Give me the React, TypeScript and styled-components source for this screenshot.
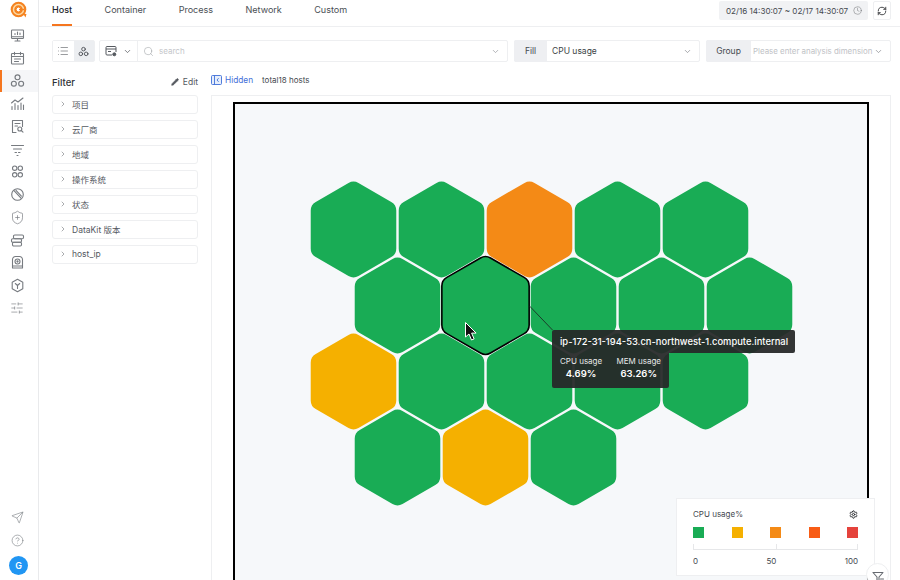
import React from 'react';
import styled, { createGlobalStyle } from 'styled-components';
import {
  ChevronDown,
  ChevronRight,
  CircleHelp,
  Clock,
  List,
  Pencil,
  RefreshCw,
  Search,
  Send,
  Settings,
  ShieldPlus,
  SlidersHorizontal,
} from 'lucide-react';

const GlobalStyle = createGlobalStyle`
  html, body {
    margin: 0;
    padding: 0;
    background: #fff;
    overflow: hidden;
  }
  body {
    font-family: Inter, "Noto Sans CJK SC", sans-serif;
    color: #33373d;
  }
  * { box-sizing: border-box; }
`;

const Page = styled.div`
  display: flex;
  width: 900px;
  height: 580px;
  overflow: hidden;
`;

const Sidebar = styled.nav`
  flex: 0 0 39px;
  display: flex;
  flex-direction: column;
  align-items: stretch;
  border-right: 1px solid #e9eaec;
  padding-bottom: 5px;
`;

const LogoSlot = styled.div`
  height: 24px;
  padding: 1px 0 0 10px;
`;

const NavItem = styled.div<{ $active?: boolean }>`
  height: 22.75px;
  display: flex;
  justify-content: center;
  align-items: center;
  padding-right: 6px;
  color: #777b80;
  background: ${p => (p.$active ? '#f5f6f8' : 'transparent')};
  border-left: 2px solid ${p => (p.$active ? '#f5761f' : 'transparent')};
`;

const SideSpacer = styled.div`
  flex: 1;
`;

const Avatar = styled.div`
  width: 19px;
  height: 19px;
  margin: 4px 0 0 9px;
  border-radius: 50%;
  background: #2196f3;
  color: #fff;
  font-size: 9px;
  font-weight: 600;
  display: flex;
  justify-content: center;
  align-items: center;
`;

const Main = styled.main`
  flex: 1;
  min-width: 0;
  display: flex;
  flex-direction: column;
  padding-left: 13px;
`;

const TopBar = styled.header`
  height: 27px;
  margin-left: -13px;
  padding: 0 9px 0 13px;
  display: flex;
  justify-content: space-between;
  border-bottom: 1px solid #eeeff1;
`;

const Tabs = styled.div`
  display: flex;
  gap: 32.4px;
`;

const Tab = styled.div<{ $active?: boolean }>`
  height: 26px;
  padding-top: 3px;
  font-size: 9.05px;
  line-height: 14px;
  color: ${p => (p.$active ? '#24272b' : '#4b4f55')};
  font-weight: ${p => (p.$active ? 500 : 400)};
  border-bottom: 2px solid ${p => (p.$active ? '#f5761f' : 'transparent')};
`;

const TopActions = styled.div`
  display: flex;
  gap: 5px;
  padding-top: 1px;
`;

const DateButton = styled.div`
  width: 149px;
  height: 19px;
  padding-left: 7px;
  border-radius: 2px;
  background: #f1f2f4;
  display: flex;
  align-items: center;
  gap: 5px;
  font-size: 8.1px;
  white-space: nowrap;
  color: #45494f;
`;

const RefreshButton = styled.div`
  width: 18px;
  height: 19px;
  border: 1px solid #eeeff1;
  border-radius: 2px;
  display: flex;
  justify-content: center;
  align-items: center;
  color: #26292d;
`;

const Toolbar = styled.div`
  height: 22px;
  margin: 13px 9px 0 0;
  display: flex;
  gap: 6px;
`;

const ToggleGroup = styled.div`
  width: 43px;
  display: flex;
  border: 1px solid #eeeff1;
  border-radius: 2px;
  margin-right: -2px;
`;

const ToggleButton = styled.div<{ $active?: boolean }>`
  flex: 1;
  display: flex;
  justify-content: center;
  align-items: center;
  color: #45494f;
  background: ${p => (p.$active ? '#eceef1' : '#fff')};
`;

const SearchGroup = styled.div`
  width: 409px;
  display: flex;
  align-items: center;
  border: 1px solid #eeeff1;
  border-radius: 2px;
  color: #8b8e93;
`;

const SearchScope = styled.div`
  width: 38px;
  height: 100%;
  display: flex;
  justify-content: center;
  align-items: center;
  gap: 6px;
  border-right: 1px solid #eeeff1;
  color: #55595f;
`;

const SearchInput = styled.div`
  flex: 1;
  display: flex;
  align-items: center;
  gap: 5px;
  padding: 0 7px 0 5px;
  font-size: 8px;
  color: #c4c6ca;
`;

const PushRight = styled.div`
  margin-left: auto;
  display: flex;
  color: #9b9ea3;
`;

const FieldGroup = styled.div<{ $width: number }>`
  width: ${p => p.$width}px;
  display: flex;
  border: 1px solid #eeeff1;
  border-radius: 2px;
`;

const FieldLabel = styled.div<{ $width: number }>`
  flex: 0 0 ${p => p.$width}px;
  margin: -1px 0 -1px -1px;
  background: #eeeff2;
  border-radius: 2px 0 0 2px;
  display: flex;
  justify-content: center;
  align-items: center;
  font-size: 8.5px;
  color: #45494f;
`;

const FieldValue = styled.div<{ $muted?: boolean }>`
  flex: 1;
  min-width: 0;
  display: flex;
  justify-content: space-between;
  align-items: center;
  padding: 0 7px 0 ${p => (p.$muted ? 2 : 5)}px;
  font-size: ${p => (p.$muted ? 7.9 : 8.5)}px;
  white-space: nowrap;
  color: ${p => (p.$muted ? '#c0c2c6' : '#3b3f45')};
  svg { color: #8b8e93; flex: none; }
`;

const Content = styled.div`
  flex: 1;
  min-height: 0;
  display: flex;
  gap: 13px;
  margin-right: 9px;
`;

const FilterColumn = styled.aside`
  flex: 0 0 146px;
`;

const FilterHeader = styled.div`
  height: 33px;
  padding-top: 7px;
  display: flex;
  justify-content: space-between;
  align-items: center;
  font-size: 9.5px;
  font-weight: 500;
  color: #2d3136;
`;

const EditLink = styled.div`
  display: flex;
  align-items: center;
  gap: 4px;
  font-size: 8.5px;
  font-weight: 400;
  color: #55595f;
`;

const FilterList = styled.div`
  display: flex;
  flex-direction: column;
  gap: 6px;
`;

const FilterItem = styled.div`
  height: 19px;
  border: 1px solid #eeeff1;
  border-radius: 3px;
  display: flex;
  align-items: center;
  gap: 5px;
  padding: 0 0 2px 6px;
  font-size: 8.5px;
  color: #55595f;
`;

const ChartColumn = styled.section`
  flex: 1;
  min-width: 0;
  display: flex;
  flex-direction: column;
`;

const SummaryRow = styled.div`
  height: 33px;
  padding-top: 3px;
  display: flex;
  align-items: center;
  gap: 9px;
  font-size: 8px;
  color: #45494f;
`;

const HiddenLink = styled.div`
  display: flex;
  align-items: center;
  gap: 3px;
  font-size: 8.3px;
  color: #3f6fd8;
`;

const Panel = styled.div`
  flex: 1;
  min-height: 0;
  border: 1px solid #eeeff1;
  border-bottom: none;
  padding: 6px 21px 0;
  position: relative;
`;

const Canvas = styled.div`
  height: 500px;
  border: 2px solid #000;
  background: #f6f8fa;
  position: relative;
`;

const HexMap = styled.svg`
  display: block;
  width: 100%;
  height: 100%;
`;

const TooltipBox = styled.div`
  position: absolute;
  left: 317px;
  top: 226px;
  color: #fff;
`;

const TooltipTitle = styled.div`
  width: 243px;
  height: 23px;
  padding-left: 8px;
  display: flex;
  align-items: center;
  font-size: 9.4px;
  font-weight: 500;
  white-space: nowrap;
  background: rgba(38, 40, 40, 0.94);
  border-radius: 2px 2px 2px 0;
`;

const TooltipStats = styled.div`
  width: 117px;
  height: 35px;
  padding: 3px 8px 0;
  display: flex;
  justify-content: space-between;
  background: rgba(38, 40, 40, 0.94);
  border-radius: 0 0 2px 2px;
`;

const Stat = styled.div`
  text-align: center;
  font-size: 8px;
  line-height: 11px;
  color: #e8e8e8;
`;

const StatValue = styled.div`
  font-size: 9.5px;
  line-height: 13px;
  font-weight: 600;
  color: #fff;
`;

const Legend = styled.div`
  position: absolute;
  left: 441px;
  top: 394px;
  width: 199px;
  height: 78px;
  padding: 9px 16px;
  background: #fff;
  border: 1px solid #eeeff1;
`;

const LegendTitle = styled.div`
  display: flex;
  justify-content: space-between;
  align-items: center;
  font-size: 8px;
  line-height: 12px;
  color: #45494f;
  svg { color: #26292d; }
`;

const Swatches = styled.div`
  margin-top: 7px;
  display: flex;
  justify-content: space-between;
`;

const Swatch = styled.div<{ $color: string }>`
  width: 11px;
  height: 11px;
  background: ${p => p.$color};
`;

const ScaleBar = styled.div`
  height: 6px;
  margin-top: 6px;
  border: 1px solid #e6e7e9;
  border-top: none;
  position: relative;
  &::after {
    content: '';
    position: absolute;
    left: 50%;
    top: 0;
    bottom: 0;
    width: 1px;
    background: #e6e7e9;
  }
`;

const ScaleLabels = styled.div`
  margin-top: 6px;
  display: flex;
  justify-content: space-between;
  font-size: 8px;
  color: #45494f;
`;

const RoundButton = styled.div`
  position: absolute;
  left: 631px;
  top: 459px;
  width: 23px;
  height: 23px;
  padding-top: 7px;
  border-radius: 50%;
  background: #fff;
  border: 1px solid #eeeff1;
  display: flex;
  justify-content: center;
  color: #666a70;
`;

const GREEN = '#19ac55';
const YELLOW = '#f5b000';
const ORANGE = '#f48a16';

// page coordinates minus the canvas corner (235, 104)
const hexes = [
  ...[GREEN, GREEN, ORANGE, GREEN, GREEN].map((c, i) => ({ x: 353.5 + i * 88, y: 229.5, c })),
  ...[GREEN, GREEN, GREEN, GREEN, GREEN].map((c, i) => ({ x: 397.5 + i * 88, y: 305.5, c })),
  ...[YELLOW, GREEN, GREEN, GREEN, GREEN].map((c, i) => ({ x: 353.5 + i * 88, y: 381.5, c })),
  ...[GREEN, YELLOW, GREEN].map((c, i) => ({ x: 397.5 + i * 88, y: 457.5, c })),
].map(h => ({ ...h, x: h.x - 235, y: h.y - 104 }));

function hexPath(cx: number, cy: number, R: number, r: number) {
  const pts = [0, 1, 2, 3, 4, 5].map(i => {
    const a = (Math.PI / 3) * i - Math.PI / 2;
    return [cx + R * Math.cos(a), cy + R * Math.sin(a)];
  });
  const cut = r * Math.tan(Math.PI / 6);
  let d = '';
  pts.forEach((p, i) => {
    const prev = pts[(i + 5) % 6];
    const next = pts[(i + 1) % 6];
    const toward = (q: number[]) => {
      const dx = q[0] - p[0];
      const dy = q[1] - p[1];
      const len = Math.hypot(dx, dy);
      return [p[0] + (dx / len) * cut, p[1] + (dy / len) * cut];
    };
    const a = toward(prev);
    const b = toward(next);
    d += `${i === 0 ? 'M' : 'L'}${a[0].toFixed(2)} ${a[1].toFixed(2)} A${r} ${r} 0 0 1 ${b[0].toFixed(2)} ${b[1].toFixed(2)} `;
  });
  return d + 'Z';
}

const Logo = () => (
  <svg width="18" height="18" viewBox="0 0 18 18">
    <circle cx="8.500" cy="8.500" r="7.800" fill="#f5821f" />
    <path d="M13 12.500l3.500 0.500-1 3.500z" fill="#f5821f" />
    <circle cx="8.500" cy="8.500" r="5" fill="none" stroke="#fbd9a4" strokeWidth="1.500" />
    <circle cx="8.500" cy="8.500" r="2.400" fill="#fff" stroke="#f5821f" strokeWidth="1" />
    <path d="M9 8.500h5.500" stroke="#f5821f" strokeWidth="1.400" />
  </svg>
);

const stroke = {
  fill: 'none',
  stroke: 'currentColor',
  strokeWidth: 1.1,
  strokeLinecap: 'round' as const,
  strokeLinejoin: 'round' as const,
};

const MonitorIcon = () => (
  <svg width="15" height="15" viewBox="0 0 15 15" {...stroke}>
    <rect x="1.500" y="2" width="12" height="8.500" rx="0.800" />
    <path d="M1.500 8.800h12M5 13h5M7.500 10.500V13" />
    <path d="M5 6.500v-1M7.500 6.500V4M10 6.500V5" />
  </svg>
);

const CalendarIcon = () => (
  <svg width="15" height="15" viewBox="0 0 15 15" {...stroke}>
    <rect x="1.500" y="2.500" width="12" height="10.500" rx="0.800" />
    <path d="M1.500 5.500h12M4.500 1.300v2.400M10.500 1.300v2.400M4.500 8h6M4.500 10.500h4" />
  </svg>
);

const HostIcon = ({ size = 14 }: { size?: number }) => (
  <svg width={size} height={size} viewBox="0 0 14 14" {...stroke}>
    <circle cx="7" cy="4" r="2.300" />
    <circle cx="3.600" cy="10" r="2.300" />
    <circle cx="10.400" cy="10" r="2.300" />
  </svg>
);

const ChartIcon = () => (
  <svg width="15" height="15" viewBox="0 0 15 15" {...stroke}>
    <path d="M1.500 7l3.500-3 3 2 5-4" />
    <path d="M2 13.500v-3M5 13.500V7.500M8 13.500V9.500M11 13.500V7M13.500 13.500V9" />
  </svg>
);

const ReportIcon = () => (
  <svg width="15" height="15" viewBox="0 0 15 15" {...stroke}>
    <path d="M6 13.500H2.500v-12h10v6" />
    <path d="M5 4.500h5M5 7h2.500" />
    <circle cx="9.800" cy="10" r="2" />
    <path d="M11.300 11.500l1.700 1.700" />
  </svg>
);

const FunnelLinesIcon = () => (
  <svg width="15" height="15" viewBox="0 0 15 15" {...stroke}>
    <path d="M1.500 3.500h12M3.500 7h8" />
    <path d="M5 10.500h1.500M8.500 10.500h1.500M7 13.500h1" />
  </svg>
);

const ClustersIcon = () => (
  <svg width="15" height="15" viewBox="0 0 15 15" {...stroke}>
    <circle cx="4.700" cy="4.200" r="2.200" />
    <circle cx="10.300" cy="4.200" r="2.200" />
    <circle cx="4.700" cy="10.800" r="2.200" />
    <circle cx="10.300" cy="10.800" r="2.200" />
  </svg>
);

const GaugeIcon = () => (
  <svg width="15" height="15" viewBox="0 0 15 15" {...stroke}>
    <circle cx="7.500" cy="7.500" r="5.800" />
    <path d="M4 3.600l7 7.600M6 3.400l5.400 5.800" />
  </svg>
);

const ServerIcon = () => (
  <svg width="15" height="15" viewBox="0 0 15 15" {...stroke}>
    <rect x="3.500" y="2" width="10" height="3.800" rx="1.200" />
    <rect x="1.500" y="5.800" width="10" height="3.500" rx="1.200" />
    <rect x="2.500" y="9.300" width="9" height="3.700" rx="1.200" />
  </svg>
);

const DiskIcon = () => (
  <svg width="15" height="15" viewBox="0 0 15 15" {...stroke}>
    <path d="M2.500 13V4.500a3 3 0 0 1 3-3h4a3 3 0 0 1 3 3V13z" />
    <circle cx="7.500" cy="6.500" r="2.500" />
    <circle cx="7.500" cy="6.500" r="0.600" />
    <path d="M2.500 11h10" />
  </svg>
);

const HexYIcon = () => (
  <svg width="15" height="15" viewBox="0 0 15 15" {...stroke}>
    <path d="M7.500 1.300l5.300 3v6.400l-5.300 3-5.300-3V4.300z" />
    <path d="M5.300 5.500l2.200 2 2.200-2M7.500 7.500v3" />
  </svg>
);

const PanelToggleIcon = () => (
  <svg width="11" height="10" viewBox="0 0 11 10" fill="none" stroke="#3f6fd8" strokeWidth="0.9">
    <rect x="0.500" y="0.500" width="10" height="9" rx="1" fill="#e6eefb" />
    <path d="M3.500 0.500v9M7.600 3.200L6 5l1.600 1.800" />
  </svg>
);

const ViewScopeIcon = () => (
  <svg width="12" height="12" viewBox="0 0 12 12" fill="none" stroke="currentColor" strokeWidth="1">
    <path d="M7 10H2a1 1 0 0 1-1-1V2.500a1 1 0 0 1 1-1h8a1 1 0 0 1 1 1V7" />
    <path d="M1 4h10" />
    <path d="M3 6.500h3" />
    <circle cx="9.300" cy="9.300" r="1.500" fill="currentColor" />
  </svg>
);

const FilterSlashIcon = () => (
  <svg width="12" height="12" viewBox="0 0 12 12" {...stroke}>
    <path d="M1 1.500h10L7 6v4.500L5 9V6z" />
    <path d="M8.500 8h3M8.500 10h3" />
  </svg>
);

const Pointer = () => (
  <g transform="translate(230.500 218.500)">
    <path d="M0 0v14.500l3.500-3 2.500 6 2.600-1.100-2.500-5.800h4.500z" fill="#111" stroke="#fff" strokeWidth="1" />
  </g>
);

const navIcons = [
  <MonitorIcon />,
  <CalendarIcon />,
  <HostIcon size={15} />,
  <ChartIcon />,
  <ReportIcon />,
  <FunnelLinesIcon />,
  <ClustersIcon />,
  <GaugeIcon />,
  <ShieldPlus size={15} strokeWidth={1.1} />,
  <ServerIcon />,
  <DiskIcon />,
  <HexYIcon />,
  <SlidersHorizontal size={14} strokeWidth={1.1} />,
];

const tabs = ['Host', 'Container', 'Process', 'Network', 'Custom'];
const filters = ['项目', '云厂商', '地域', '操作系统', '状态', 'DataKit 版本', 'host_ip'];
const scale = ['#19ac55', '#f5b000', '#f48a16', '#f85c15', '#e5433c'];

export default function App() {
  return (
    <Page>
      <GlobalStyle />
      <Sidebar>
        <LogoSlot>
          <Logo />
        </LogoSlot>
        {navIcons.map((icon, i) => (
          <NavItem key={i} $active={i === 2}>
            {icon}
          </NavItem>
        ))}
        <SideSpacer />
        <NavItem>
          <Send size={13} strokeWidth={1.1} />
        </NavItem>
        <NavItem>
          <CircleHelp size={13} strokeWidth={1.1} />
        </NavItem>
        <Avatar>G</Avatar>
      </Sidebar>

      <Main>
        <TopBar>
          <Tabs>
            {tabs.map((t, i) => (
              <Tab key={t} $active={i === 0}>
                {t}
              </Tab>
            ))}
          </Tabs>
          <TopActions>
            <DateButton>
              02/16 14:30:07 ~ 02/17 14:30:07
              <Clock size={9} strokeWidth={1} />
            </DateButton>
            <RefreshButton>
              <RefreshCw size={10} strokeWidth={2} />
            </RefreshButton>
          </TopActions>
        </TopBar>

        <Toolbar>
          <ToggleGroup>
            <ToggleButton>
              <List size={12} strokeWidth={1.1} />
            </ToggleButton>
            <ToggleButton $active>
              <HostIcon size={11} />
            </ToggleButton>
          </ToggleGroup>
          <SearchGroup>
            <SearchScope>
              <ViewScopeIcon />
              <ChevronDown size={9} />
            </SearchScope>
            <SearchInput>
              <Search size={11} strokeWidth={1} color="#8b8e93" />
              search
              <PushRight>
                <ChevronDown size={9} />
              </PushRight>
            </SearchInput>
          </SearchGroup>
          <FieldGroup $width={186}>
            <FieldLabel $width={33}>Fill</FieldLabel>
            <FieldValue>
              CPU usage
              <ChevronDown size={9} />
            </FieldValue>
          </FieldGroup>
          <FieldGroup $width={185}>
            <FieldLabel $width={45}>Group</FieldLabel>
            <FieldValue $muted>
              Please enter analysis dimension
              <ChevronDown size={9} />
            </FieldValue>
          </FieldGroup>
        </Toolbar>

        <Content>
          <FilterColumn>
            <FilterHeader>
              Filter
              <EditLink>
                <Pencil size={8} fill="currentColor" />
                Edit
              </EditLink>
            </FilterHeader>
            <FilterList>
              {filters.map(f => (
                <FilterItem key={f}>
                  <ChevronRight size={8} strokeWidth={1.5} />
                  {f}
                </FilterItem>
              ))}
            </FilterList>
          </FilterColumn>

          <ChartColumn>
            <SummaryRow>
              <HiddenLink>
                <PanelToggleIcon />
                Hidden
              </HiddenLink>
              total18 hosts
            </SummaryRow>
            <Panel>
              <Canvas>
                <HexMap viewBox="0 0 632 496" preserveAspectRatio="xMinYMin slice">
                  {hexes.map((h, i) => (
                    <path key={i} d={hexPath(h.x, h.y, 49.4, 10)} fill={h.c} />
                  ))}
                  <path
                    d={hexPath(250.500, 201.500, 50.400, 10)}
                    fill={GREEN}
                    stroke="#000"
                    strokeWidth="1.600"
                  />
                  <path d="M294.500 202l23 24" stroke="#1c1f1f" strokeWidth="0.800" />
                  <Pointer />
                </HexMap>
                <TooltipBox>
                  <TooltipTitle>ip-172-31-194-53.cn-northwest-1.compute.internal</TooltipTitle>
                  <TooltipStats>
                    <Stat>
                      CPU usage
                      <StatValue>4.69%</StatValue>
                    </Stat>
                    <Stat>
                      MEM usage
                      <StatValue>63.26%</StatValue>
                    </Stat>
                  </TooltipStats>
                </TooltipBox>
                <Legend>
                  <LegendTitle>
                    CPU usage%
                    <Settings size={9} strokeWidth={2.500} />
                  </LegendTitle>
                  <Swatches>
                    {scale.map(c => (
                      <Swatch key={c} $color={c} />
                    ))}
                  </Swatches>
                  <ScaleBar />
                  <ScaleLabels>
                    <span>0</span>
                    <span>50</span>
                    <span>100</span>
                  </ScaleLabels>
                </Legend>
                <RoundButton>
                  <FilterSlashIcon />
                </RoundButton>
              </Canvas>
            </Panel>
          </ChartColumn>
        </Content>
      </Main>
    </Page>
  );
}
